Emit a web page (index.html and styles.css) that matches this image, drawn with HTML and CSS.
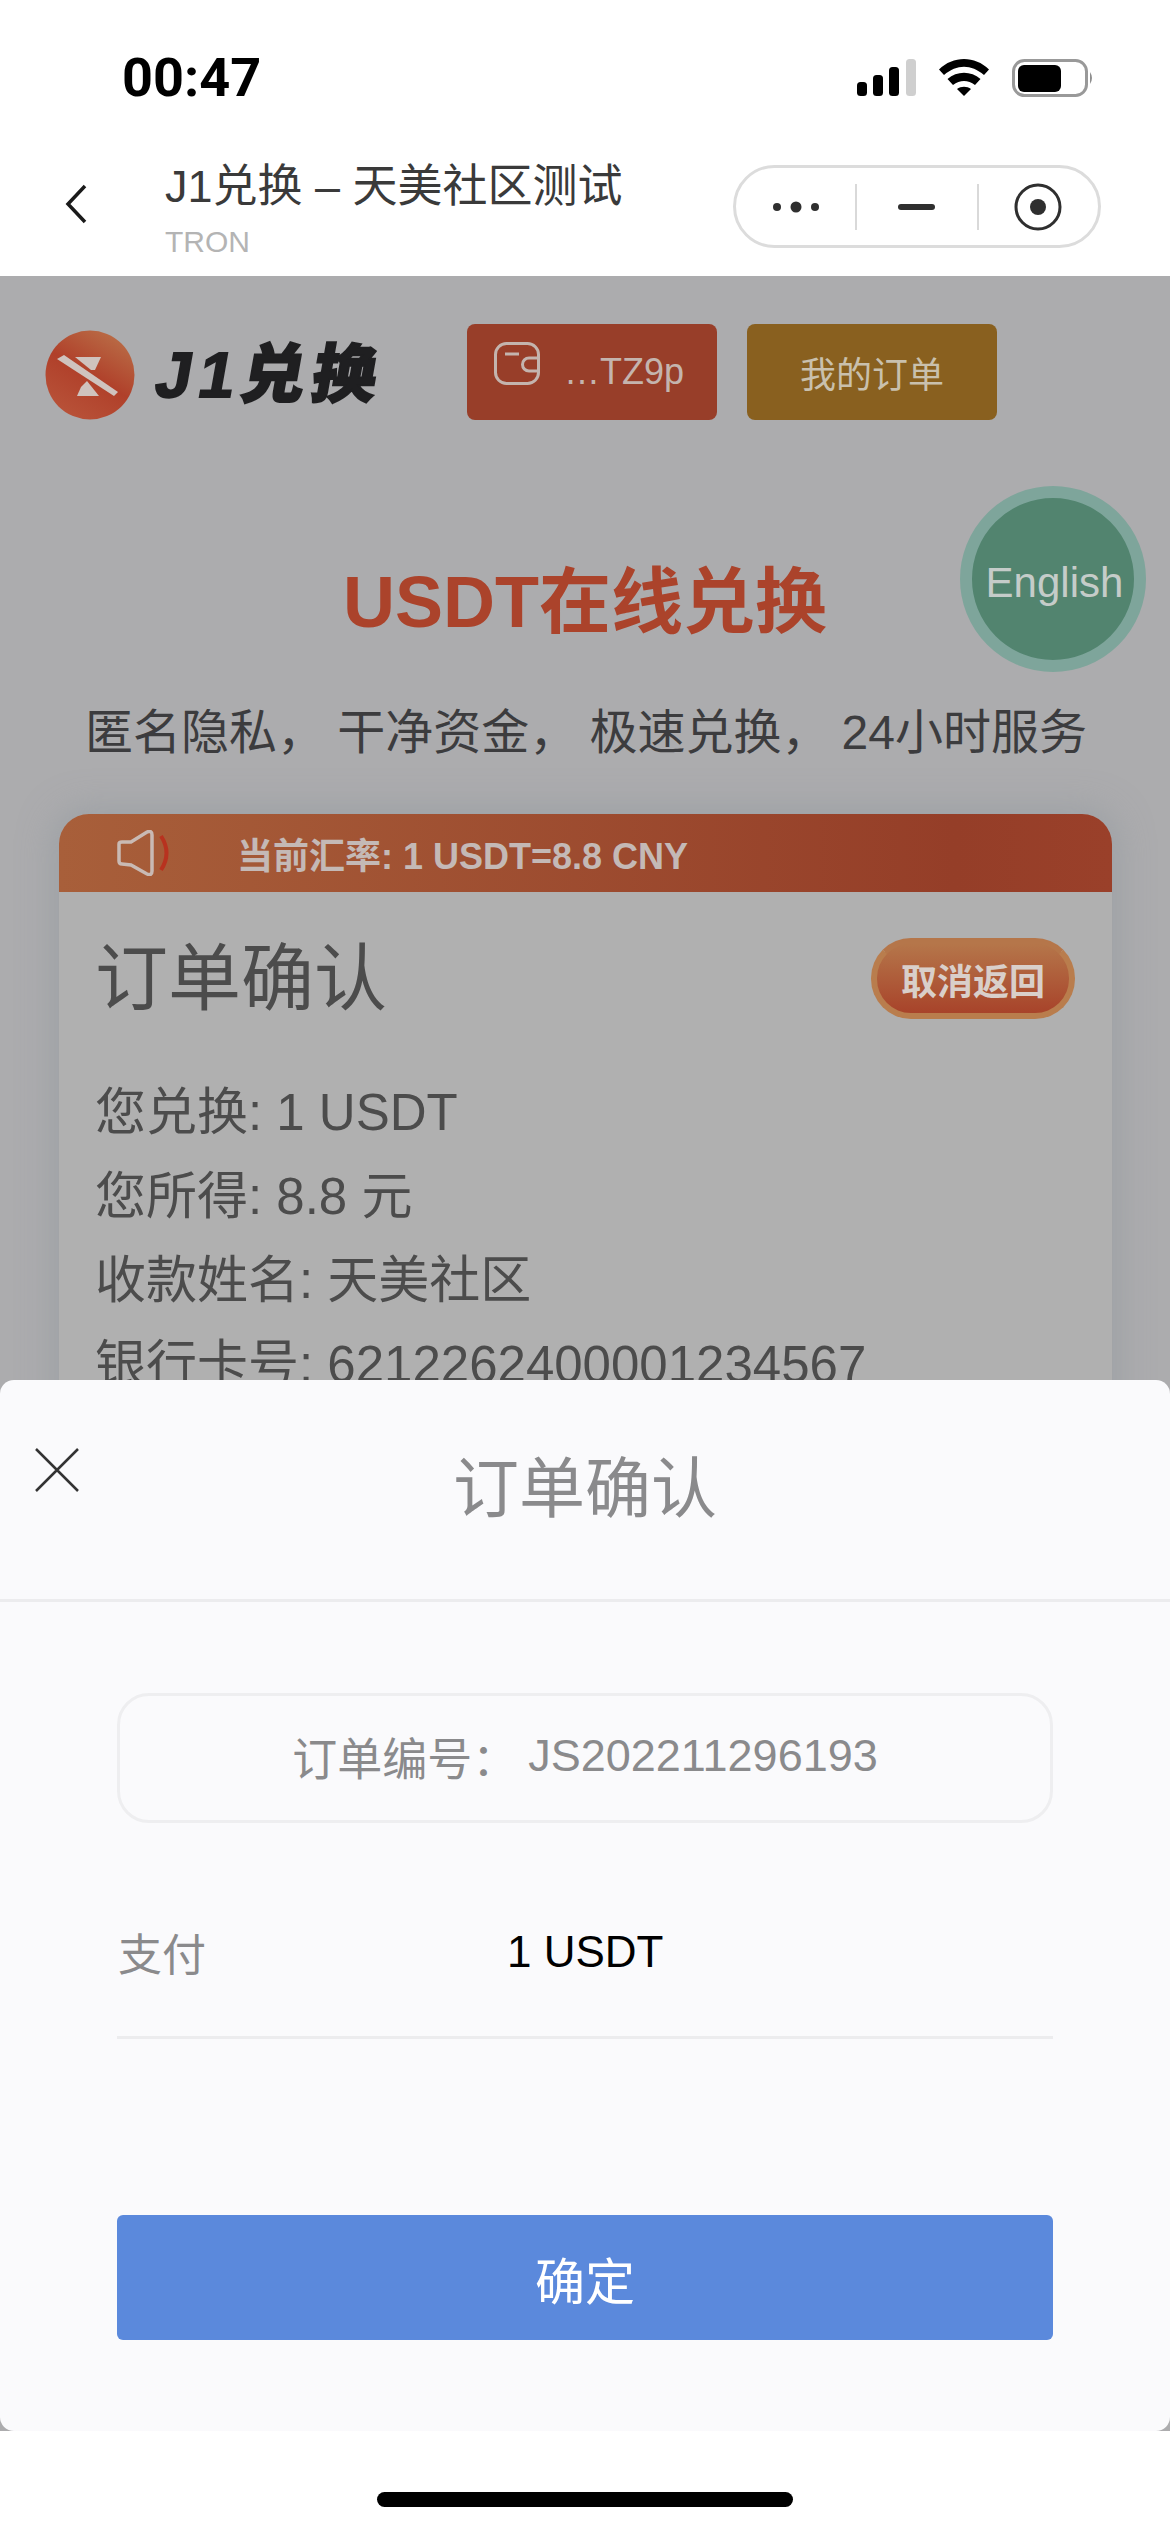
FILE: index.html
```html
<!DOCTYPE html>
<html lang="zh-CN">
<head>
    <meta charset="UTF-8">
    <meta name="viewport" content="width=device-width, initial-scale=1.0">
    <title>J1兑换 - 天美社区测试</title>
    <link rel="stylesheet" href="styles.css">
</head>
<body>

    <div class="status-bar">
        <span class="time">00:47</span>
        <div class="status-icons">
            <svg width="59" height="38" viewBox="0 0 59 38">
                <rect x="0" y="23" width="10" height="14" rx="3.5" fill="#000"/>
                <rect x="16" y="16" width="10" height="21" rx="3.5" fill="#000"/>
                <rect x="32" y="8" width="10" height="29" rx="3.5" fill="#000"/>
                <rect x="49" y="0" width="10" height="37" rx="3.5" fill="#cfcfcf"/>
            </svg>
            <svg width="50" height="38" viewBox="0 0 50 38">
                <path d="M0 10.5 C14 -3.5 36 -3.5 50 10.5 L45 16 C32 5 18 5 5 16 Z" fill="#000"/>
                <path d="M8.5 20 C18 11.5 32 11.5 41.5 20 L36 26 C29 20.5 21 20.5 14 26 Z" fill="#000"/>
                <path d="M18 30 C22 27 28 27 32 30 L25 37 Z" fill="#000"/>
            </svg>
            <svg width="82" height="38" viewBox="0 0 82 38">
                <rect x="1.5" y="1.5" width="73" height="35" rx="11" fill="none" stroke="#999" stroke-width="3"/>
                <rect x="6" y="6" width="43" height="27" rx="6" fill="#000"/>
                <path d="M78 13 Q82 19 78 25 Z" fill="#8e8e8e"/>
            </svg>
        </div>
    </div>

    <div class="nav-bar">
        <svg class="nav-back" width="26" height="40" viewBox="0 0 26 40">
            <path d="M21 2 L4 20 L21 38" fill="none" stroke="#1a1a1a" stroke-width="3.5"/>
        </svg>
        <div class="nav-title">
            <div class="nav-name">J1兑换 – 天美社区测试</div>
            <div class="nav-sub">TRON</div>
        </div>
        <div class="capsule">
            <span class="capsule-cell">
                <svg width="48" height="14" viewBox="0 0 48 14">
                    <circle cx="5" cy="7" r="4" fill="#2f2f2f"/>
                    <circle cx="24" cy="7" r="5.5" fill="#2f2f2f"/>
                    <circle cx="43" cy="7" r="4" fill="#2f2f2f"/>
                </svg>
            </span>
            <span class="capsule-line"></span>
            <span class="capsule-cell">
                <svg width="37" height="6" viewBox="0 0 37 6"><rect width="37" height="6" rx="3" fill="#2f2f2f"/></svg>
            </span>
            <span class="capsule-line"></span>
            <span class="capsule-cell">
                <svg width="48" height="48" viewBox="0 0 48 48">
                    <circle cx="24" cy="24" r="22" fill="none" stroke="#2f2f2f" stroke-width="3"/>
                    <circle cx="24" cy="24" r="8" fill="#2f2f2f"/>
                </svg>
            </span>
        </div>
    </div>

    <div class="main">
        <div class="head-row">
            <div class="logo">
                <svg width="90" height="90" viewBox="0 0 90 90">
                    <defs>
                        <linearGradient id="logoFill" x1="0.8" y1="0" x2="0.2" y2="1">
                            <stop offset="0" stop-color="#ba6f48"/>
                            <stop offset="0.5" stop-color="#b0402a"/>
                            <stop offset="1" stop-color="#b9543a"/>
                        </linearGradient>
                    </defs>
                    <circle cx="45" cy="45" r="44.5" fill="url(#logoFill)"/>
                    <path d="M12 29 L19 25 L73 62 L69 66 Z" fill="#cfc3be"/>
                    <path d="M30 27 L56 27 L50 40 L46 40 Z" fill="#cfc3be"/>
                    <path d="M42 51 L54 66 L32 66 L36 57 Z" fill="#cfc3be"/>
                </svg>
                <span class="logo-text">J1兑换</span>
            </div>
            <div class="btn-wallet">
                <svg class="wallet-icon" width="46" height="43" viewBox="0 0 46 43">
                    <rect x="1.5" y="1.5" width="43" height="40" rx="11" fill="none" stroke="#c4b4ae" stroke-width="3"/>
                    <path d="M11 12 H25" stroke="#c4b4ae" stroke-width="3"/>
                    <path d="M44 16 H35 A6.5 6.5 0 0 0 35 29 H44" fill="none" stroke="#c4b4ae" stroke-width="3"/>
                </svg>
                <span>…TZ9p</span>
            </div>
            <div class="btn-orders">我的订单</div>
        </div>

        <div class="lang-btn"><span>English</span></div>

        <h1 class="page-title">USDT在线兑换</h1>
        <div class="slogan">
            <span>匿名隐私，</span><span>干净资金，</span><span>极速兑换，</span><span>24小时服务</span>
        </div>

        <div class="card">
            <div class="rate-bar">
                <svg width="62" height="46" viewBox="0 0 62 46">
                    <path d="M4 14 Q4 12 7 12 L16 12 L32 2 Q37 0 37 5 L37 41 Q37 46 32 44 L16 35 L7 34 Q4 34 4 31 Z" fill="none" stroke="#c9bab4" stroke-width="3.5"/>
                    <path d="M46 6 Q57 23 46 40" fill="none" stroke="#b8321f" stroke-width="4"/>
                </svg>
                <span class="rate-text">当前汇率: 1 USDT=8.8 CNY</span>
            </div>
            <div class="card-body">
                <div class="card-head">
                    <span class="card-title">订单确认</span>
                    <span class="btn-cancel">取消返回</span>
                </div>
                <div class="card-row">您兑换: 1 USDT</div>
                <div class="card-row">您所得: 8.8 元</div>
                <div class="card-row">收款姓名: 天美社区</div>
                <div class="card-row">银行卡号: 6212262400001234567</div>
            </div>
        </div>

        <div class="sheet">
            <div class="sheet-head">
                <svg class="sheet-close" width="46" height="46" viewBox="0 0 46 46">
                    <path d="M2 2 L44 44 M44 2 L2 44" fill="none" stroke="#333" stroke-width="2.5"/>
                </svg>
                <span class="sheet-title">订单确认</span>
            </div>
            <div class="sheet-body">
                <div class="order-no"><span>订单编号：</span><span class="order-code">JS202211296193</span></div>
                <div class="pay-row">
                    <span class="pay-label">支付</span>
                    <span class="pay-value">1 USDT</span>
                </div>
                <div class="btn-ok">确定</div>
            </div>
        </div>
    </div>

    <div class="home-area"><div class="home-bar"></div></div>

</body>
</html>
```

FILE: styles.css
```css
html, body {
    margin: 0;
    padding: 0;
}
body {
    width: 1170px;
    height: 2532px;
    display: flex;
    flex-direction: column;
    overflow: hidden;
    background: #fff;
    font-family: "Liberation Sans", "Noto Sans CJK SC", sans-serif;
}

/* status bar + nav */
.status-bar {
    height: 136px;
    box-sizing: border-box;
    padding: 50px 76px 0 122px;
    display: flex;
    justify-content: space-between;
    align-items: flex-start;
}
.time {
    font-family: Roboto, "Liberation Sans", sans-serif;
    font-size: 54px;
    line-height: 56px;
    font-weight: 700;
    color: #000;
}
.status-icons {
    display: flex;
    align-items: center;
    gap: 23px;
    padding-top: 9px;
}
.nav-bar {
    height: 140px;
    display: flex;
    align-items: flex-start;
}
.nav-back {
    margin: 48px 0 0 64px;
}
.nav-title {
    margin-left: 75px;
    width: 568px;
}
.nav-name {
    font-size: 45px;
    line-height: 50px;
    color: #3a3a3a;
    margin-top: 26px;
}
.nav-sub {
    font-size: 30px;
    line-height: 34px;
    color: #b4b4b4;
    margin-top: 13px;
}
.capsule {
    width: 368px;
    height: 83px;
    box-sizing: border-box;
    margin-top: 29px;
    border: 3px solid #dcdcdc;
    border-radius: 42px;
    display: flex;
    align-items: center;
}
.capsule-cell {
    flex: 1;
    display: flex;
    justify-content: center;
}
.capsule-line {
    width: 2px;
    height: 46px;
    background: #d9d9d9;
}

/* dimmed page behind the sheet */
.main {
    position: relative;
    height: 2155px;
    overflow: hidden;
    background: #acacae;
}
.head-row {
    display: flex;
    align-items: flex-start;
    padding: 48px 0 0 45px;
}
.logo {
    display: flex;
    align-items: center;
    gap: 22px;
    width: 422px;
    margin-top: 6px;
}
.logo-text {
    font-size: 64px;
    line-height: 70px;
    font-weight: 900;
    letter-spacing: 7px;
    white-space: nowrap;
    color: #1f1f21;
    transform: skewX(-10deg);
    -webkit-text-stroke: 2px #1f1f21;
}
.btn-wallet,
.btn-orders {
    width: 250px;
    height: 96px;
    border-radius: 8px;
    display: flex;
    align-items: center;
    font-size: 36px;
}
.btn-wallet {
    background: #983e29;
    color: #c4b4ae;
    box-sizing: border-box;
    padding: 0 0 0 27px;
    gap: 24px;
    margin-right: 30px;
}
.wallet-icon {
    margin-top: -18px;
}
.btn-orders {
    background: #89601f;
    color: #c9c0ad;
    justify-content: center;
}
.lang-btn {
    position: absolute;
    left: 960px;
    top: 210px;
    width: 186px;
    height: 186px;
    box-sizing: border-box;
    border: 12px solid #7ea59b;
    border-radius: 50%;
    background: #52846f;
    padding: 8px 0 0 3px;
    display: flex;
    align-items: center;
    justify-content: center;
    color: #c5ccc9;
    font-size: 42px;
}
.page-title {
    margin: 140px 0 0;
    text-align: center;
    font-size: 72px;
    line-height: 84px;
    font-weight: 700;
    color: #ab432b;
}
.slogan {
    margin-top: 61px;
    padding: 0 83px 0 85px;
    display: flex;
    justify-content: space-between;
    font-size: 48px;
    line-height: 56px;
    color: #3c3c3e;
}

/* card */
.card {
    margin: 53px 58px 0 59px;
    border-radius: 30px 30px 0 0;
    background: #b0b0b0;
    box-shadow: 0 0 30px 10px rgba(150, 155, 160, 0.55);
}
.rate-bar {
    height: 78px;
    box-sizing: border-box;
    padding-left: 56px;
    display: flex;
    align-items: center;
    gap: 60px;
    border-radius: 30px 30px 0 0;
    background: linear-gradient(90deg, #a85f3a, #953e28 85%, #9a402a);
}
.rate-text {
    font-size: 36px;
    font-weight: 700;
    color: #c4b9b6;
}
.card-body {
    padding: 46px 37px 400px 36px;
}
.card-head {
    display: flex;
    justify-content: space-between;
    align-items: center;
    height: 81px;
    margin-bottom: 52px;
}
.card-title {
    font-size: 73px;
    line-height: 81px;
    color: #4c4c4c;
}
.btn-cancel {
    width: 204px;
    height: 81px;
    box-sizing: border-box;
    border: 6px solid #b97d4d;
    border-top-color: #b5764a;
    border-radius: 40px;
    background: linear-gradient(180deg, #b5764a, #a8432a);
    display: flex;
    align-items: center;
    justify-content: center;
    font-size: 36px;
    font-weight: 700;
    color: #d9cfca;
}
.card-row {
    font-size: 51px;
    line-height: 84px;
    color: #4c4c4c;
}

/* bottom sheet */
.sheet {
    position: absolute;
    left: 0;
    right: 0;
    bottom: 0;
    height: 1051px;
    border-radius: 14px;
    background: #fafafc;
}
.sheet-head {
    position: relative;
    height: 222px;
    box-sizing: border-box;
    border-bottom: 3px solid #ececee;
    display: flex;
    justify-content: center;
    padding-top: 72px;
}
.sheet-close {
    position: absolute;
    left: 34px;
    top: 67px;
}
.sheet-title {
    font-size: 66px;
    line-height: 74px;
    color: #8a8a8c;
}
.sheet-body {
    padding: 91px 117px 0;
}
.order-no {
    height: 130px;
    box-sizing: border-box;
    border: 3px solid #eeeef0;
    border-radius: 32px;
    padding-bottom: 4px;
    display: flex;
    align-items: center;
    justify-content: center;
    font-size: 45px;
    color: #8a8a8c;
}
.order-code {
    margin-left: 11px;
}
.pay-row {
    height: 216px;
    box-sizing: border-box;
    border-bottom: 3px solid #ececee;
    display: flex;
    align-items: center;
    padding: 45px 0 0 1px;
    font-size: 44px;
}
.pay-label {
    width: 389px;
    color: #8a8a8c;
}
.pay-value {
    color: #000;
}
.btn-ok {
    margin-top: 176px;
    height: 125px;
    border-radius: 6px;
    background: #5b89dc;
    display: flex;
    align-items: center;
    justify-content: center;
    font-size: 50px;
    color: #fff;
}

.home-area {
    flex: 1;
    display: flex;
    justify-content: center;
}
.home-bar {
    width: 416px;
    height: 15px;
    margin-top: 61px;
    border-radius: 8px;
    background: #000;
}
```
